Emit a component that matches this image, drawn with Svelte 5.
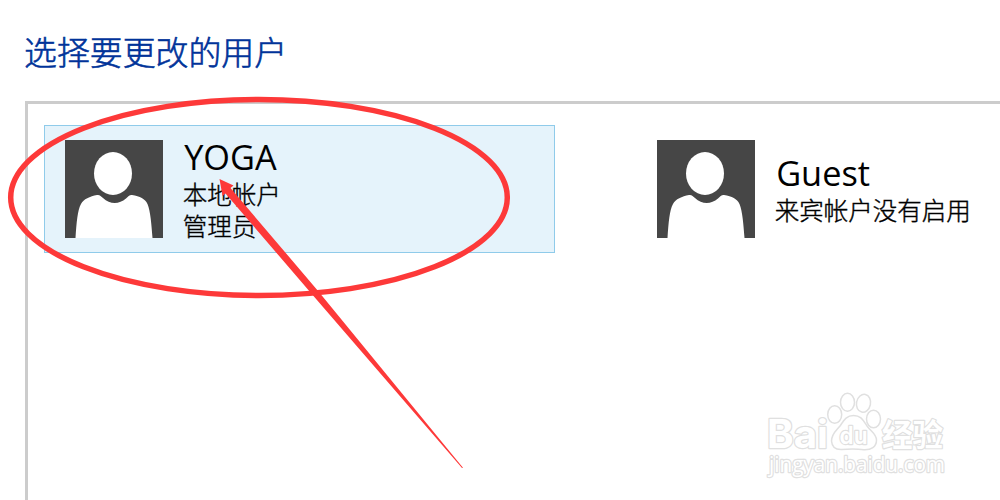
<script lang="ts">
  type Account = { name: string; details: string[]; selected: boolean };

  const accounts: Account[] = [
    { name: "YOGA", details: ["本地帐户", "管理员"], selected: true },
    { name: "Guest", details: ["来宾帐户没有启用"], selected: false },
  ];
</script>

<main class="page">
  <h1 class="title">选择要更改的用户</h1>

  <section class="accounts">
    {#each accounts as account}
      <button class="account" class:selected={account.selected}>
        <svg class="avatar" viewBox="0 0 98 98" aria-hidden="true">
          <rect width="98" height="98" fill="#464646" />
          <ellipse cx="48" cy="33.5" rx="19" ry="21.5" fill="#fff" />
          <path
            d="M10.5 98 C11.5 83 12.5 70 16 64 C18.5 59 25 56.5 32 55 C34.5 54.5 36 56 38 58 C45 64.5 54 64.5 61 58.5 C63 56.5 65 54.5 67 55 C75 56.5 80 58.5 82.5 64 C85.5 71 86.5 85 87.5 98 Z"
            fill="#fff"
          />
        </svg>
        <span class="info">
          <span class="name">{account.name}</span>
          {#each account.details as detail}
            <span class="detail">{detail}</span>
          {/each}
        </span>
      </button>
    {/each}
  </section>

  <svg class="overlay" viewBox="0 0 1000 500" aria-hidden="true">
    <g class="watermark">
      <text class="brand" x="767" y="447.5" textLength="61" lengthAdjust="spacingAndGlyphs">Bai</text>
      <ellipse cx="834.7" cy="414.5" rx="7" ry="8.8" />
      <ellipse cx="847.5" cy="402.3" rx="7" ry="9" />
      <ellipse cx="863.5" cy="403.3" rx="7" ry="9" transform="rotate(12 863.5 403.3)" />
      <ellipse cx="873.5" cy="419" rx="7" ry="8.8" />
      <path d="M853.5 415.5 C846 415.500 843.5 421 840 426 C836 431 831.5 434 831.5 441 C832 448 837 449.8 842 449.5 C849 448.7 857 448.7 864 449.7 C871 450 876.500 447 876.5 440 C876.5 434 870.5 431 867 426 C863 420 861 415.5 853.5 415.5 Z" />
      <text class="du" x="839.5" y="443.5" textLength="28" lengthAdjust="spacingAndGlyphs">du</text>
      <text class="cn" x="882" y="446" textLength="61" lengthAdjust="spacingAndGlyphs">经验</text>
      <text class="site" x="769" y="472" textLength="176" lengthAdjust="spacingAndGlyphs">jingyan.baidu.com</text>
    </g>
    <ellipse class="ring" cx="259" cy="197.5" rx="248.3" ry="98" />
    <path class="arrow" d="M219.5 179 L233.5 185.5 L230.5 188 L318.5 291.5 L463 467.8 L462 468 L313.5 296 L225.5 193.5 L222.5 196 Z" />
  </svg>
</main>

<style>
  :global(body) {
    background: #fff;
  }
  .page {
    position: relative;
    width: 1000px;
    height: 500px;
    box-sizing: border-box;
    padding: 27px 0 0 24px;
    display: flex;
    flex-direction: column;
    overflow: hidden;
    font-family: "Noto Sans CJK SC", sans-serif;
  }
  .title {
    margin: 0 0 26px;
    height: 48px;
    line-height: 48px;
    font-size: 32.9px;
    font-weight: 300;
    color: #003399;
    -webkit-text-stroke: 0.6px #003399;
  }
  .accounts {
    flex: 1;
    display: flex;
    align-items: flex-start;
    gap: 81px;
    margin-left: 1px;
    padding: 21px 0 0 16px;
    border-top: 3px solid #ccc;
    border-left: 3px solid #ccc;
  }
  .account {
    flex: none;
    display: flex;
    align-items: center;
    gap: 20px;
    width: 511px;
    height: 128px;
    box-sizing: border-box;
    padding: 0 0 0 19.7px;
    border: 1px solid transparent;
    background: none;
    color: #000;
    font: inherit;
    text-align: left;
  }
  .account.selected {
    background: #e5f3fb;
    border-color: #8fcbea;
  }
  .avatar {
    flex: none;
    width: 98px;
    height: 98px;
  }
  .info {
    display: flex;
    flex-direction: column;
  }
  .name {
    padding-left: 1.5px;
    font-family: "Open Sans", "Noto Sans", sans-serif;
    font-size: 34.3px;
    line-height: 42px;
  }
  .detail {
    font-size: 24.5px;
    font-weight: 300;
    line-height: 32px;
    white-space: nowrap;
    -webkit-text-stroke: 0.4px #000;
  }
  .overlay {
    position: absolute;
    inset: 0;
    width: 1000px;
    height: 500px;
    pointer-events: none;
  }
  .ring {
    fill: none;
    stroke: #fd3939;
    stroke-width: 5.5;
  }
  .arrow {
    fill: #fd3939;
  }
  .watermark {
    fill: #fff;
    stroke: #e0e0e0;
    stroke-width: 1.5;
  }
  .watermark text {
    font-family: Inter, sans-serif;
    paint-order: stroke;
    stroke-width: 2.4;
    stroke-linejoin: round;
  }
  .watermark .brand {
    font-size: 39px;
    font-weight: 700;
  }
  .watermark .du {
    font-size: 24px;
    font-weight: 600;
  }
  .watermark .cn {
    font-family: "Noto Sans CJK SC", sans-serif;
    font-size: 31px;
    font-weight: 700;
  }
  .watermark .site {
    font-family: "Open Sans", sans-serif;
    font-size: 21px;
    font-weight: 400;
  }
</style>
